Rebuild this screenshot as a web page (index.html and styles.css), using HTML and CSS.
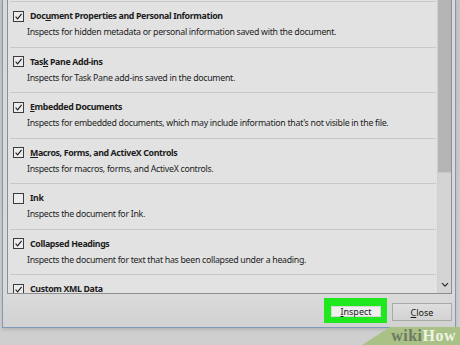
FILE: index.html
```html
<!DOCTYPE html>
<html>
<head>
<meta charset="utf-8">
<link rel="stylesheet" href="styles.css">
</head>
<body>
<div class="screen">
  <div class="dialog">
    <div class="listbox">
      <div class="list">
        <div class="row">
          <div class="head"><span class="cb on"><svg viewBox="0 0 9 9" width="9" height="9"><path d="M1.6 4.6 L3.6 6.8 L7.6 1.8" fill="none" stroke="#1e1e1e" stroke-width="1.1"/></svg></span><span class="title">Doc<u>u</u>ment Properties and Personal Information</span></div>
          <div class="desc">Inspects for hidden metadata or personal information saved with the document.</div>
        </div>
        <div class="row">
          <div class="head"><span class="cb on"><svg viewBox="0 0 9 9" width="9" height="9"><path d="M1.6 4.6 L3.6 6.8 L7.6 1.8" fill="none" stroke="#1e1e1e" stroke-width="1.1"/></svg></span><span class="title">Tas<u>k</u> Pane Add-ins</span></div>
          <div class="desc">Inspects for Task Pane add-ins saved in the document.</div>
        </div>
        <div class="row">
          <div class="head"><span class="cb on"><svg viewBox="0 0 9 9" width="9" height="9"><path d="M1.6 4.6 L3.6 6.8 L7.6 1.8" fill="none" stroke="#1e1e1e" stroke-width="1.1"/></svg></span><span class="title"><u>E</u>mbedded Documents</span></div>
          <div class="desc">Inspects for embedded documents, which may include information that's not visible in the file.</div>
        </div>
        <div class="row">
          <div class="head"><span class="cb on"><svg viewBox="0 0 9 9" width="9" height="9"><path d="M1.6 4.6 L3.6 6.8 L7.6 1.8" fill="none" stroke="#1e1e1e" stroke-width="1.1"/></svg></span><span class="title"><u>M</u>acros, Forms, and ActiveX Controls</span></div>
          <div class="desc">Inspects for macros, forms, and ActiveX controls.</div>
        </div>
        <div class="row">
          <div class="head"><span class="cb"></span><span class="title">Ink</span></div>
          <div class="desc">Inspects the document for Ink.</div>
        </div>
        <div class="row">
          <div class="head"><span class="cb on"><svg viewBox="0 0 9 9" width="9" height="9"><path d="M1.6 4.6 L3.6 6.8 L7.6 1.8" fill="none" stroke="#1e1e1e" stroke-width="1.1"/></svg></span><span class="title">Collapsed Headings</span></div>
          <div class="desc">Inspects the document for text that has been collapsed under a heading.</div>
        </div>
        <div class="row">
          <div class="head"><span class="cb on"><svg viewBox="0 0 9 9" width="9" height="9"><path d="M1.6 4.6 L3.6 6.8 L7.6 1.8" fill="none" stroke="#1e1e1e" stroke-width="1.1"/></svg></span><span class="title">Custom XML Data</span></div>
        </div>
      </div>
      <div class="scrollbar">
        <div class="thumb"></div>
        <div class="track"></div>
        <div class="arrow"><svg viewBox="0 0 8 6" width="8" height="6"><path d="M1 1.2 L4 4.2 L7 1.2" fill="none" stroke="#2a2a2a" stroke-width="1.2"/></svg></div>
      </div>
    </div>
    <div class="footer">
      <div class="focus"><button class="btn primary"><u>I</u>nspect</button></div>
      <button class="btn close"><u>C</u>lose</button>
    </div>
  </div>
  <div class="watermark"><span class="wm-text"><span class="wiki">wiki</span><span class="how">How</span></span></div>
</div>
</body>
</html>
```
FILE: styles.css
```css
html, body {
  margin: 0;
  padding: 0;
}
body {
  font-family: "Noto Sans", "Open Sans", sans-serif;
}
.screen {
  position: relative;
  width: 460px;
  height: 345px;
  overflow: hidden;
  background: linear-gradient(#c4c4c4, #cfcfcf);
}
.dialog {
  margin-left: 2px;
  width: 454px;
  height: 328px;
  box-sizing: border-box;
  border-left: 1px solid #7f97b8;
  border-right: 1px solid #7f97b8;
  border-bottom: 1px solid #7f97b8;
  background: #d9d9d9;
  display: flex;
  flex-direction: column;
  box-shadow: 0 2px 3px rgba(0,0,0,0.12);
}
.listbox {
  margin-left: 4px;
  width: 445px;
  height: 294px;
  box-sizing: border-box;
  border-left: 1px solid #8e8e8e;
  border-right: 1px solid #8e8e8e;
  border-bottom: 1px solid #8e8e8e;
  background: #e2e2e2;
  display: flex;
  flex: none;
}
.list {
  flex: 1;
  overflow: hidden;
  padding-top: 1px;
}
.row {
  height: 45.5px;
  box-sizing: border-box;
  margin: 0 1px 0 2px;
  border-top: 1px solid #c8c8c8;
  display: flex;
  flex-direction: column;
}
.head {
  margin-top: 8px;
  height: 12px;
  display: flex;
  align-items: center;
  gap: 6px;
  padding-left: 3px;
}
.cb {
  width: 11px;
  height: 11px;
  box-sizing: border-box;
  border: 1px solid #3c3c3c;
  background: #ececec;
  display: flex;
  align-items: center;
  justify-content: center;
  flex: none;
}
.cb svg {
  display: block;
}
.title {
  font-size: 8.8px;
  letter-spacing: -0.36px;
  font-weight: bold;
  color: #1c1c1c;
  line-height: 12px;
  white-space: nowrap;
}
.desc {
  margin-top: 4px;
  padding-left: 17px;
  font-size: 8.8px;
  letter-spacing: -0.3px;
  line-height: 12px;
  color: #222;
  white-space: nowrap;
}
u {
  text-decoration-thickness: 1px;
  text-underline-offset: 1px;
}
.scrollbar {
  width: 14px;
  flex: none;
  display: flex;
  flex-direction: column;
  border-left: 1px solid #cfcfcf;
  box-sizing: border-box;
  background: #d4d4d4;
}
.thumb {
  height: 172px;
  background: #b5b5b5;
  border-bottom: 1px solid #c7c7c7;
}
.track {
  flex: 1;
}
.arrow {
  height: 16px;
  display: flex;
  align-items: center;
  justify-content: center;
}
.arrow svg {
  display: block;
}
.footer {
  flex: 1;
  display: flex;
  justify-content: flex-end;
  align-items: flex-start;
  padding-right: 3px;
  background: linear-gradient(#dadada, #d2d2d2);
}
.focus {
  margin-top: 4px;
  padding: 8px 6px 6px 7px;
  background: #1fe81f;
}
.btn {
  font-family: "Noto Sans", "Open Sans", sans-serif;
  font-size: 9px;
  color: #1a1a1a;
  margin: 0;
  padding: 0;
  display: flex;
  align-items: center;
  justify-content: center;
  box-sizing: border-box;
}
.primary {
  width: 50px;
  height: 11px;
  background: #efefef;
  border: 1px solid #d6d6d6;
  line-height: 9px;
}
.close {
  margin-top: 9px;
  margin-left: 5px;
  width: 60px;
  height: 18px;
  background: linear-gradient(#dedede, #d3d3d3);
  border: 1px solid #a9a9a9;
}
.watermark {
  position: absolute;
  right: 0;
  bottom: 0;
  width: 98px;
  height: 18px;
  background: #a9c086;
  clip-path: polygon(28px 0, 100% 0, 100% 100%, 0 100%);
  display: flex;
  align-items: center;
  justify-content: flex-end;
  padding-right: 4px;
  box-sizing: border-box;
}
.wm-text {
  font-family: "Liberation Serif", "DejaVu Serif", serif;
  font-weight: bold;
  font-size: 16px;
  letter-spacing: 0.5px;
  line-height: 16px;
}
.wiki {
  color: #6e7a63;
}
.how {
  color: #eef3e4;
}
```
